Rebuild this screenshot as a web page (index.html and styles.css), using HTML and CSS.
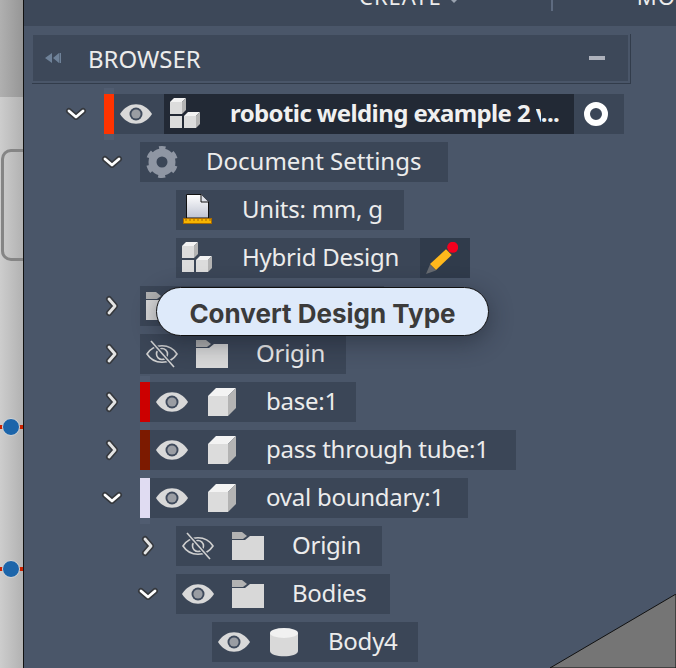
FILE: index.html
```html
<!DOCTYPE html>
<html lang="en">
<head>
  <meta charset="UTF-8"/>
  <title>Browser</title>
  <link rel="stylesheet" href="styles.css">
</head>
<body>
  <!-- Shared icons -->
  <svg class="defs" xmlns="http://www.w3.org/2000/svg">
    <defs>
      <linearGradient id="pageFill" x1="0" y1="0" x2="0" y2="1">
        <stop offset="0" stop-color="#ffffff"/>
        <stop offset="1" stop-color="#bfc4d2"/>
      </linearGradient>
    </defs>
    <symbol id="eye" viewBox="0 0 32 32">
      <path d="M0 16C8 3 24 3 32 16C24 29 8 29 0 16Z" fill="#d9d9d9"/>
      <circle cx="16" cy="16" r="6.5" fill="#3f4a5c"/>
      <circle cx="16" cy="16" r="4.6" fill="#9a9da3"/>
    </symbol>
    <symbol id="eye-off" viewBox="0 0 32 32">
      <path d="M1 16C8 5 24 5 31 16C24 27 8 27 1 16Z" fill="none" stroke="#d0d0d0" stroke-width="1.6"/>
      <circle cx="16" cy="16" r="5.5" fill="none" stroke="#d0d0d0" stroke-width="1.6"/>
      <path d="M5 3L28 29" stroke="#3b4657" stroke-width="4"/>
      <path d="M5 3L28 29" stroke="#d0d0d0" stroke-width="1.6"/>
    </symbol>
    <symbol id="cube" viewBox="0 0 32 32">
      <path d="M2 10L10 2H30L22 10Z" fill="#f3f3f3"/>
      <path d="M22 10L30 2V22L22 30Z" fill="#b4b4b4"/>
      <rect x="2" y="10" width="20" height="20" fill="#dcdcdc"/>
    </symbol>
    <symbol id="cubes" viewBox="0 0 32 32">
      <path d="M0 4L4 0H16L12 4Z" fill="#f3f3f3"/>
      <path d="M12 4L16 0V12L12 16Z" fill="#b4b4b4"/>
      <rect x="0" y="4" width="12" height="12" fill="#dcdcdc"/>
      <rect x="0" y="18" width="12" height="12" fill="#dcdcdc"/>
      <path d="M14 18L18 14H30L26 18Z" fill="#f3f3f3"/>
      <path d="M26 18L30 14V26L26 30Z" fill="#b4b4b4"/>
      <rect x="14" y="18" width="12" height="12" fill="#dcdcdc"/>
    </symbol>
    <symbol id="folder" viewBox="0 0 32 32">
      <path d="M0 2H10L15 6L11 9H0Z" fill="#b2b2b2"/>
      <path d="M0 10H13L18 6H32V30H0Z" fill="#d8d8d8"/>
    </symbol>
    <symbol id="gear" viewBox="0 0 32 32">
      <circle cx="16" cy="16" r="9.5" fill="none" stroke="#8f96a3" stroke-width="8"/>
      <circle cx="16" cy="16" r="14" fill="none" stroke="#8f96a3" stroke-width="4" stroke-dasharray="7 7.66" stroke-dashoffset="3.5" transform="rotate(-90 16 16)"/>
    </symbol>
    <symbol id="doc" viewBox="0 0 32 32">
      <path d="M4.5 .5H19L26.5 8V24H4.5Z" fill="url(#pageFill)" stroke="#111" stroke-width="1"/>
      <path d="M19 .5V8H26.5" fill="#dfe2ea" stroke="#111" stroke-width="1"/>
      <rect x="1.5" y="24.5" width="28" height="5" fill="#f7b500" stroke="#a86a00" stroke-width="1"/>
      <path d="M4 25V27M8 25V27M12 25V27M16 25V27M20 25V27M24 25V27M28 25V27" stroke="#a86a00" stroke-width="1"/>
    </symbol>
    <symbol id="pencil" viewBox="0 0 32 32">
      <path d="M4 22.500L10 28.500L0 32Z" fill="#666a70"/>
      <path d="M20 7.300L25.700 13L10 28L4 22Z" fill="#ffb81c"/>
      <circle cx="26.700" cy="5.300" r="5.500" fill="#f5001e"/>
    </symbol>
    <symbol id="cylinder" viewBox="0 0 32 32">
      <path d="M2 7V25C2 32 30 32 30 25V7Z" fill="#d9d9d9"/>
      <ellipse cx="16" cy="7" rx="14" ry="5" fill="#f1f1f1"/>
    </symbol>
    <symbol id="chev-down" viewBox="0 0 24 24">
      <path d="M5 9L12 15L19 9" fill="none" stroke="#35383d" stroke-width="6" stroke-linecap="round" stroke-linejoin="round"/>
      <path d="M5 9L12 15L19 9" fill="none" stroke="#fff" stroke-width="2.800" stroke-linecap="round" stroke-linejoin="round"/>
    </symbol>
    <symbol id="chev-right" viewBox="0 0 24 24">
      <path d="M9 5L15 12L9 19" fill="none" stroke="#35383d" stroke-width="6" stroke-linecap="round" stroke-linejoin="round"/>
      <path d="M9 5L15 12L9 19" fill="none" stroke="#e4e4e4" stroke-width="2.800" stroke-linecap="round" stroke-linejoin="round"/>
    </symbol>
  </svg>

  <div class="app">
    <aside class="side">
      <div class="side-top"></div>
      <div class="side-button"></div>
      <div class="side-mark first"><div class="side-dot"></div></div>
      <div class="side-mark second"><div class="side-dot"></div></div>
    </aside>

    <div class="panel">
      <div class="toolbar">
        <span class="tool create">CREATE</span>
        <span class="tool-caret"></span>
        <span class="tool-sep"></span>
        <span class="tool modify">MODIFY</span>
      </div>

      <div class="browser-head">
        <div class="browser-bar">
          <svg class="rewind" viewBox="0 0 16 10"><path d="M7 0V10L0 5ZM14 0V10L8 5Z" fill="#6f8299"/><rect x="14.500" y="0" width="1.500" height="10" fill="#6f8299"/></svg>
          <span class="browser-title">BROWSER</span>
          <span class="minimize"></span>
        </div>
      </div>

      <ul class="tree">
        <li class="node">
          <span class="chev"><svg><use href="#chev-down"/></svg></span>
          <div class="row">
            <span class="swatch orange"></span>
            <span class="cell"><svg class="ico"><use href="#eye"/></svg></span>
            <div class="active">
              <span class="cell"><svg class="ico"><use href="#cubes"/></svg></span>
              <span class="label root-label">robotic welding example 2 <span class="clipped">v</span>...</span>
            </div>
            <span class="cell radio-cell"><span class="radio"></span></span>
          </div>
        </li>
        <li class="node lvl1">
          <span class="chev"><svg><use href="#chev-down"/></svg></span>
          <div class="row settings-row">
            <span class="cell"><svg class="ico"><use href="#gear"/></svg></span>
            <span class="label settings-label">Document Settings</span>
          </div>
        </li>
        <li class="node lvl2">
          <span class="chev"></span>
          <div class="row units-row">
            <span class="cell"><svg class="ico"><use href="#doc"/></svg></span>
            <span class="label">Units: mm, g</span>
          </div>
        </li>
        <li class="node lvl2">
          <span class="chev"></span>
          <div class="row hybrid-row">
            <span class="cell"><svg class="ico"><use href="#cubes"/></svg></span>
            <span class="label">Hybrid Design</span>
            <span class="cell pencil-cell"><svg class="ico"><use href="#pencil"/></svg></span>
          </div>
        </li>
        <li class="node lvl1">
          <span class="chev"><svg><use href="#chev-right"/></svg></span>
          <div class="row views-row">
            <span class="cell"><svg class="ico"><use href="#folder"/></svg></span>
            <span class="label">Named Views</span>
          </div>
          <div class="tooltip">Convert Design Type</div>
        </li>
        <li class="node lvl1">
          <span class="chev"><svg><use href="#chev-right"/></svg></span>
          <div class="row origin-row">
            <span class="cell"><svg class="ico"><use href="#eye-off"/></svg></span>
            <span class="cell"><svg class="ico"><use href="#folder"/></svg></span>
            <span class="label">Origin</span>
          </div>
        </li>
        <li class="node lvl1">
          <span class="chev"><svg><use href="#chev-right"/></svg></span>
          <div class="row base-row">
            <span class="swatch red"></span>
            <span class="cell"><svg class="ico"><use href="#eye"/></svg></span>
            <span class="cell"><svg class="ico"><use href="#cube"/></svg></span>
            <span class="label">base:1</span>
          </div>
        </li>
        <li class="node lvl1">
          <span class="chev"><svg><use href="#chev-right"/></svg></span>
          <div class="row tube-row">
            <span class="swatch maroon"></span>
            <span class="cell"><svg class="ico"><use href="#eye"/></svg></span>
            <span class="cell"><svg class="ico"><use href="#cube"/></svg></span>
            <span class="label">pass through tube:1</span>
          </div>
        </li>
        <li class="node lvl1">
          <span class="chev"><svg><use href="#chev-down"/></svg></span>
          <div class="row oval-row">
            <span class="swatch lilac"></span>
            <span class="cell"><svg class="ico"><use href="#eye"/></svg></span>
            <span class="cell"><svg class="ico"><use href="#cube"/></svg></span>
            <span class="label">oval boundary:1</span>
          </div>
        </li>
        <li class="node lvl2">
          <span class="chev"><svg><use href="#chev-right"/></svg></span>
          <div class="row origin-row">
            <span class="cell"><svg class="ico"><use href="#eye-off"/></svg></span>
            <span class="cell"><svg class="ico"><use href="#folder"/></svg></span>
            <span class="label">Origin</span>
          </div>
        </li>
        <li class="node lvl2">
          <span class="chev"><svg><use href="#chev-down"/></svg></span>
          <div class="row bodies-row">
            <span class="cell"><svg class="ico"><use href="#eye"/></svg></span>
            <span class="cell"><svg class="ico"><use href="#folder"/></svg></span>
            <span class="label">Bodies</span>
          </div>
        </li>
        <li class="node lvl3">
          <span class="chev"></span>
          <div class="row origin-row">
            <span class="cell"><svg class="ico"><use href="#eye"/></svg></span>
            <span class="cell"><svg class="ico"><use href="#cylinder"/></svg></span>
            <span class="label">Body4</span>
          </div>
        </li>
      </ul>

      <!-- Corner of the model showing behind the panel -->
      <svg class="model" viewBox="0 0 126 74"><path d="M0 74L126 0V74Z" fill="#757575" stroke="#111" stroke-width="1"/></svg>
    </div>
  </div>
</body>
</html>
```

FILE: styles.css
```css
* {
  box-sizing: border-box;
}
body {
  margin: 0;
  height: 668px;
  overflow: hidden;
  background: #4a5669;
  font-family: 'Noto Sans', sans-serif;
  color: #ececec;
}
.defs {
  position: absolute;
  width: 0;
  height: 0;
}

.app {
  display: flex;
  height: 668px;
}

/* Strip of the canvas on the left */
.side {
  width: 24px;
  flex: none;
  display: flex;
  flex-direction: column;
  background: linear-gradient(90deg, #cdcdcd, #b2b2b2);
  border-right: 1px solid #111;
}
.side-top {
  height: 97px;
  background: linear-gradient(90deg, #b0b0b0, #969696);
}
.side-button {
  height: 112px;
  margin: 52px 0 0 1px;
  border: 3px solid #858585;
  border-right: none;
  border-radius: 10px 0 0 10px;
}
.side-mark {
  height: 18px;
  padding-left: 2px;
  background: linear-gradient(#0000 7px, #cc2200 7px, #cc2200 11px, #0000 11px);
}
.side-mark.first {
  margin-top: 157px;
}
.side-mark.second {
  margin-top: 124px;
}
.side-dot {
  width: 18px;
  height: 18px;
  background: #1c65aa;
  border: 1px solid #d6d6d6;
  border-radius: 50%;
}

.panel {
  flex: 1;
  position: relative;
  overflow: hidden;
}

.toolbar {
  height: 26px;
  overflow: hidden;
  display: flex;
  align-items: flex-start;
  background: #3d4859;
  padding-left: 335px;
  font-size: 22px;
  white-space: nowrap;
}
.tool {
  line-height: 24px;
  margin-top: -16px;
  letter-spacing: 1px;
}
.tool-caret {
  width: 0;
  height: 0;
  margin-left: 9px;
  border: 3px solid transparent;
  border-top-color: #9aa3b0;
}
.tool-sep {
  flex: none;
  width: 2px;
  height: 11px;
  margin: 0 84px 0 94px;
  background: #5e6b80;
}

.browser-head {
  width: 599px;
  margin: 8px 0 0 8px;
  padding: 1px 2px 2px 1px;
  border-right: 1px solid #323c4b;
  border-bottom: 1px solid #323c4b;
}
.browser-bar {
  height: 46px;
  display: flex;
  align-items: center;
  padding-left: 12px;
  background: #3d4859;
}
.rewind {
  width: 16px;
  height: 10px;
  flex: none;
}
.browser-title {
  margin-left: 27px;
  padding-top: 1px;
  font-size: 24px;
}
.minimize {
  width: 16px;
  height: 4px;
  margin-left: auto;
  margin-right: 23px;
  background: #aeb2bc;
}

.tree {
  list-style: none;
  margin: 10px 0 0 40px;
  padding: 0;
  display: flex;
  flex-direction: column;
  gap: 8px;
}
.node {
  position: relative;
  display: flex;
  align-items: center;
  height: 40px;
}
.lvl1 {
  margin-left: 36px;
}
.lvl2 {
  margin-left: 72px;
}
.lvl3 {
  margin-left: 108px;
}
.chev {
  width: 40px;
  height: 24px;
  flex: none;
}
.chev svg {
  display: block;
  width: 24px;
  height: 24px;
}

.row {
  display: flex;
  align-items: center;
  height: 40px;
  background: #3b4657;
}
.settings-row { width: 308px; }
.units-row { width: 228px; }
.hybrid-row { width: 294px; }
.views-row { width: 244px; }
.origin-row { width: 206px; }
.base-row { width: 216px; }
.tube-row { width: 376px; }
.oval-row { width: 328px; }
.bodies-row { width: 214px; }

.swatch {
  width: 10px;
  height: 40px;
  flex: none;
  box-shadow: 0 6px 0 #505c70, 0 -6px 0 #505c70;
}
.swatch.orange {
  background: #ff3300;
}
.swatch.red {
  background: #cc0000;
}
.swatch.maroon {
  background: #7c1a00;
}
.swatch.lilac {
  background: #e0dcf2;
}
.cell {
  width: 50px;
  height: 40px;
  flex: none;
  display: flex;
  align-items: center;
  padding-left: 6px;
}
.ico {
  width: 32px;
  height: 32px;
  display: block;
}
.label {
  padding-left: 16px;
  margin-bottom: 2px;
  font-size: 24px;
  line-height: 38px;
  letter-spacing: -0.25px;
  white-space: nowrap;
}
.settings-label {
  letter-spacing: 0;
}

/* Active root component */
.active {
  display: flex;
  align-items: center;
  width: 410px;
  height: 40px;
  background: #222935;
}
.root-label {
  font-weight: 700;
  color: #f0f0f0;
  letter-spacing: -0.6px;
}
.clipped {
  display: inline-block;
  width: 5px;
  overflow: hidden;
  vertical-align: bottom;
}
.radio-cell {
  padding-left: 10px;
}
.radio {
  width: 24px;
  height: 24px;
  border: 6px solid #fff;
  border-radius: 50%;
}
.pencil-cell {
  margin-left: auto;
  background: #303b4b;
}

.tooltip {
  position: absolute;
  z-index: 5;
  left: 56px;
  top: 1px;
  width: 333px;
  height: 49px;
  padding-top: 3px;
  display: flex;
  align-items: center;
  justify-content: center;
  background: #deeafa;
  border: 1.5px solid #111;
  border-radius: 25px;
  box-shadow: 0 6px 24px rgba(20, 25, 35, 0.45);
  font-family: Inter, sans-serif;
  font-size: 26px;
  font-weight: 700;
  color: #3b3b3b;
  white-space: nowrap;
}

.model {
  position: absolute;
  right: 0;
  bottom: 0;
  width: 126px;
  height: 74px;
}
```
